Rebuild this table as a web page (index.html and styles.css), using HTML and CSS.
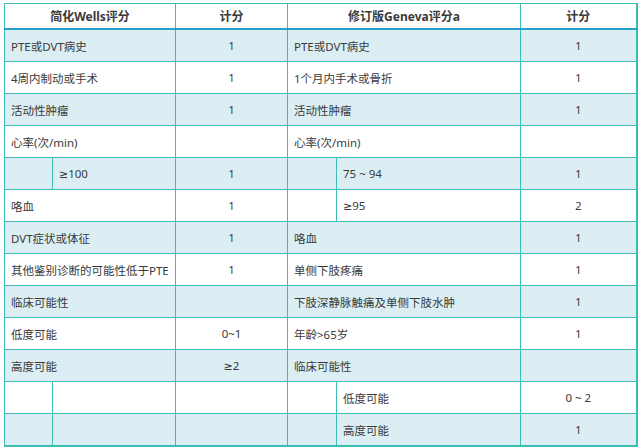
FILE: index.html
```html
<!DOCTYPE html>
<html lang="zh">
<head>
<meta charset="utf-8">
<link rel="stylesheet" href="styles.css">
</head>
<body>
<table class="score">
<colgroup>
<col class="w-a"><col class="w-b"><col class="w-c"><col class="w-d"><col class="w-e"><col class="w-f">
</colgroup>
<thead>
<tr class="head">
<th colspan="2">简化Wells评分</th><th>计分</th><th colspan="2">修订版Geneva评分a</th><th>计分</th>
</tr>
</thead>
<tbody>
<tr class="alt"><td colspan="2">PTE或DVT病史</td><td class="n">1</td><td colspan="2">PTE或DVT病史</td><td class="n">1</td></tr>
<tr><td colspan="2">4周内制动或手术</td><td class="n">1</td><td colspan="2">1个月内手术或骨折</td><td class="n">1</td></tr>
<tr class="alt"><td colspan="2">活动性肿瘤</td><td class="n">1</td><td colspan="2">活动性肿瘤</td><td class="n">1</td></tr>
<tr><td colspan="2">心率(次/min)</td><td class="n"></td><td colspan="2">心率(次/min)</td><td class="n"></td></tr>
<tr class="alt"><td></td><td><span class="sym">≥</span>100</td><td class="n">1</td><td></td><td>75 ~ 94</td><td class="n">1</td></tr>
<tr><td colspan="2">咯血</td><td class="n">1</td><td></td><td><span class="sym">≥</span>95</td><td class="n">2</td></tr>
<tr class="alt"><td colspan="2">DVT症状或体征</td><td class="n">1</td><td colspan="2">咯血</td><td class="n">1</td></tr>
<tr><td colspan="2">其他鉴别诊断的可能性低于PTE</td><td class="n">1</td><td colspan="2">单侧下肢疼痛</td><td class="n">1</td></tr>
<tr class="alt"><td colspan="2">临床可能性</td><td class="n"></td><td colspan="2">下肢深静脉触痛及单侧下肢水肿</td><td class="n">1</td></tr>
<tr><td colspan="2">低度可能</td><td class="n">0~1</td><td colspan="2">年龄&gt;65岁</td><td class="n">1</td></tr>
<tr class="alt"><td colspan="2">高度可能</td><td class="n"><span class="sym">≥</span>2</td><td colspan="2">临床可能性</td><td class="n"></td></tr>
<tr><td></td><td></td><td class="n"></td><td></td><td>低度可能</td><td class="n">0 ~ 2</td></tr>
<tr class="alt"><td></td><td></td><td class="n"></td><td></td><td>高度可能</td><td class="n">1</td></tr>
</tbody>
</table>
</body>
</html>
```
FILE: styles.css
```css
html, body {
  margin: 0;
  padding: 0;
  background: #ffffff;
}
body {
  padding: 3px 0 0 4px;
  font-family: "Noto Sans", "Noto Sans CJK SC", sans-serif;
  font-size: 11.5px;
  color: #3a3a3a;
}
.score {
  border-collapse: collapse;
  table-layout: fixed;
  width: 632px;
}
.w-a { width: 48px; }
.w-b { width: 123px; }
.w-c { width: 112px; }
.w-d { width: 49px; }
.w-e { width: 184px; }
.w-f { width: 116px; }
.score th, .score td {
  border: 1px solid #3dbcb4;
  padding: 0 0 0 6px;
  height: 31px;
  vertical-align: middle;
  white-space: nowrap;
  overflow: hidden;
  text-align: left;
  font-weight: normal;
}
.score .head th {
  height: 24px;
  text-align: center;
  padding: 0;
  font-weight: bold;
  font-size: 12px;
  border-bottom: 2px solid #2a9fcb;
}
.score td.n {
  text-align: center;
  padding: 0;
}
.sym {
  font-family: "DejaVu Sans", sans-serif;
  font-size: 11px;
}
.alt td {
  background: #daeef4;
}
.score tbody tr:last-child td {
  border-bottom: 2px solid #3dbcb4;
}
.score th:last-child, .score td:last-child {
  border-right: 2px solid #3dbcb4;
}
```
